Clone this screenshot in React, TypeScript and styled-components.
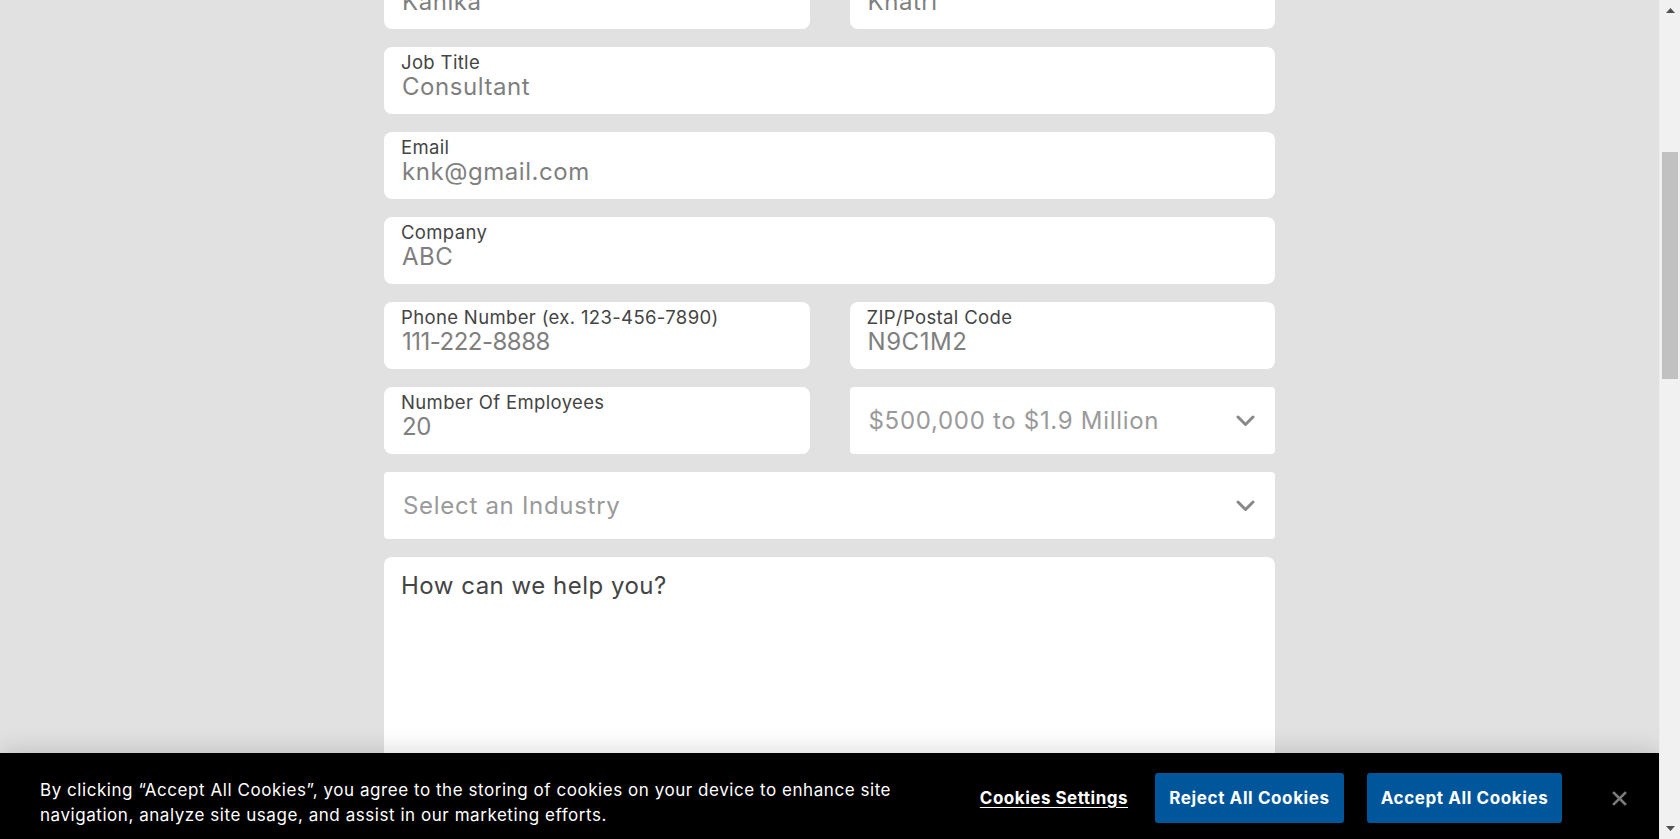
import React from "react";
import styled, { createGlobalStyle } from "styled-components";

const GlobalStyle = createGlobalStyle`
  html, body { margin: 0; padding: 0; height: 100%; overflow: hidden; }
  body { background: #e1e1e1; font-family: "Inter", "Liberation Sans", sans-serif; }
  * { box-sizing: border-box; }
`;

const Shell = styled.div`
  display: flex;
  height: 100vh;
  width: 100vw;
`;

const Viewport = styled.div`
  position: relative;
  flex: 1;
  overflow: hidden;
  background: #e1e1e1;
`;

const Form = styled.form`
  width: 891px;
  margin: -38px auto 0;
  display: grid;
  grid-template-columns: 1fr 1fr;
  column-gap: 40px;
  row-gap: 18px;
`;

const Field = styled.div<{ $full?: boolean }>`
  grid-column: ${(p) => (p.$full ? "1 / -1" : "auto")};
  background: #fff;
  border-radius: 8px;
  height: 67px;
  padding: 5px 17px 0;
  display: flex;
  flex-direction: column;
`;

const Label = styled.span`
  font-size: 18.5px;
  line-height: 21px;
  letter-spacing: 0.35px;
  color: #444;
`;

const Value = styled.span<{ $numeric?: boolean }>`
  font-size: 24px;
  line-height: 28px;
  letter-spacing: ${(p) => (p.$numeric ? "-0.5px" : "0.55px")};
  color: #7f7f7f;
  padding-left: 1px;
`;

const Select = styled.div<{ $full?: boolean }>`
  grid-column: ${(p) => (p.$full ? "1 / -1" : "auto")};
  background: #fff;
  border-radius: 4px;
  height: 67px;
  padding: 0 20px 0 19px;
  display: flex;
  align-items: center;
  justify-content: space-between;
`;

const SelectText = styled.span`
  font-size: 24px;
  letter-spacing: 0.7px;
  color: #9a9a9a;
`;

const Chevron = () => (
  <svg width="19" height="12" viewBox="0 0 19 12" fill="none">
    <path d="M2 2 L9.5 9.5 L17 2" stroke="#888" strokeWidth="3" strokeLinecap="round" strokeLinejoin="round" />
  </svg>
);

const TextArea = styled.div`
  grid-column: 1 / -1;
  background: #fff;
  border-radius: 8px 8px 0 0;
  height: 320px;
  padding: 15px 17px;
`;

const AreaPlaceholder = styled.span`
  font-size: 24px;
  line-height: 28px;
  letter-spacing: 0.5px;
  color: #444;
`;

const Banner = styled.div`
  position: absolute;
  left: 0;
  right: 0;
  bottom: 0;
  height: 86px;
  background: #000;
  box-shadow: 0 0 24px rgba(0, 0, 0, 0.18);
  display: flex;
  align-items: center;
  padding: 10px 0 0 40px;
`;

const BannerText = styled.p`
  margin: 4px 0 0;
  width: 880px;
  color: #fff;
  font-size: 17px;
  line-height: 25px;
  letter-spacing: 0.55px;
`;

const Actions = styled.div`
  display: flex;
  align-items: center;
  margin-left: auto;
  margin-bottom: 6px;
`;

const LinkButton = styled.button`
  background: none;
  border: none;
  padding: 0;
  color: #fff;
  font-family: inherit;
  font-weight: 700;
  font-size: 17px;
  letter-spacing: 0.5px;
  text-decoration: underline;
  text-underline-offset: 3px;
  margin-right: 27px;
  cursor: pointer;
`;

const PrimaryButton = styled.button<{ $w: number; $gap: number }>`
  width: ${(p) => p.$w}px;
  height: 50px;
  margin-right: ${(p) => p.$gap}px;
  background: #00569b;
  color: #fff;
  border: none;
  border-radius: 3px;
  font-family: inherit;
  font-weight: 700;
  font-size: 17px;
  letter-spacing: 0.6px;
  cursor: pointer;
`;

const Close = styled.button`
  background: none;
  border: none;
  padding: 0;
  width: 40px;
  height: 40px;
  margin: 0 20px 0 37px;
  display: flex;
  align-items: center;
  justify-content: center;
  cursor: pointer;
`;

const Scrollbar = styled.div`
  width: 21px;
  background: #f1f1f1;
  display: flex;
  flex-direction: column;
  align-items: center;
  border-left: 1px solid #ececec;
`;

const Arrow = styled.div`
  height: 21px;
  width: 100%;
  display: flex;
  align-items: center;
  justify-content: center;
`;

const Track = styled.div`
  flex: 1;
  width: 100%;
  padding: 131px 2px 0;
`;

const Thumb = styled.div`
  height: 227px;
  background: #c1c1c1;
`;

export default function App() {
  return (
    <>
      <GlobalStyle />
      <Shell>
        <Viewport>
          <Form>
            <Field>
              <Label>First Name</Label>
              <Value>Kanika</Value>
            </Field>
            <Field>
              <Label>Last Name</Label>
              <Value>Khatri</Value>
            </Field>
            <Field $full>
              <Label>Job Title</Label>
              <Value>Consultant</Value>
            </Field>
            <Field $full>
              <Label>Email</Label>
              <Value>knk@gmail.com</Value>
            </Field>
            <Field $full>
              <Label>Company</Label>
              <Value>ABC</Value>
            </Field>
            <Field>
              <Label>Phone Number (ex. 123-456-7890)</Label>
              <Value $numeric>111-222-8888</Value>
            </Field>
            <Field>
              <Label>ZIP/Postal Code</Label>
              <Value>N9C1M2</Value>
            </Field>
            <Field>
              <Label>Number Of Employees</Label>
              <Value $numeric>20</Value>
            </Field>
            <Select>
              <SelectText>$500,000 to $1.9 Million</SelectText>
              <Chevron />
            </Select>
            <Select $full>
              <SelectText>Select an Industry</SelectText>
              <Chevron />
            </Select>
            <TextArea>
              <AreaPlaceholder>How can we help you?</AreaPlaceholder>
            </TextArea>
          </Form>
          <Banner>
            <BannerText>
              By clicking “Accept All Cookies”, you agree to the storing of cookies on your device to enhance site
              navigation, analyze site usage, and assist in our marketing efforts.
            </BannerText>
            <Actions>
              <LinkButton type="button">Cookies Settings</LinkButton>
              <PrimaryButton type="button" $w={189} $gap={23}>Reject All Cookies</PrimaryButton>
              <PrimaryButton type="button" $w={195} $gap={0}>Accept All Cookies</PrimaryButton>
              <Close type="button" aria-label="Close">
                <svg width="15" height="15" viewBox="0 0 15 15">
                  <path d="M2 2 L13 13 M13 2 L2 13" stroke="#7a7a7a" strokeWidth="2.6" strokeLinecap="square" />
                </svg>
              </Close>
            </Actions>
          </Banner>
        </Viewport>
        <Scrollbar>
          <Arrow>
            <svg width="9" height="5" viewBox="0 0 9 5"><path d="M0 5 L4.5 0 L9 5 Z" fill="#505050" /></svg>
          </Arrow>
          <Track>
            <Thumb />
          </Track>
          <Arrow>
            <svg width="9" height="5" viewBox="0 0 9 5"><path d="M0 0 L4.5 5 L9 0 Z" fill="#505050" /></svg>
          </Arrow>
        </Scrollbar>
      </Shell>
    </>
  );
}
